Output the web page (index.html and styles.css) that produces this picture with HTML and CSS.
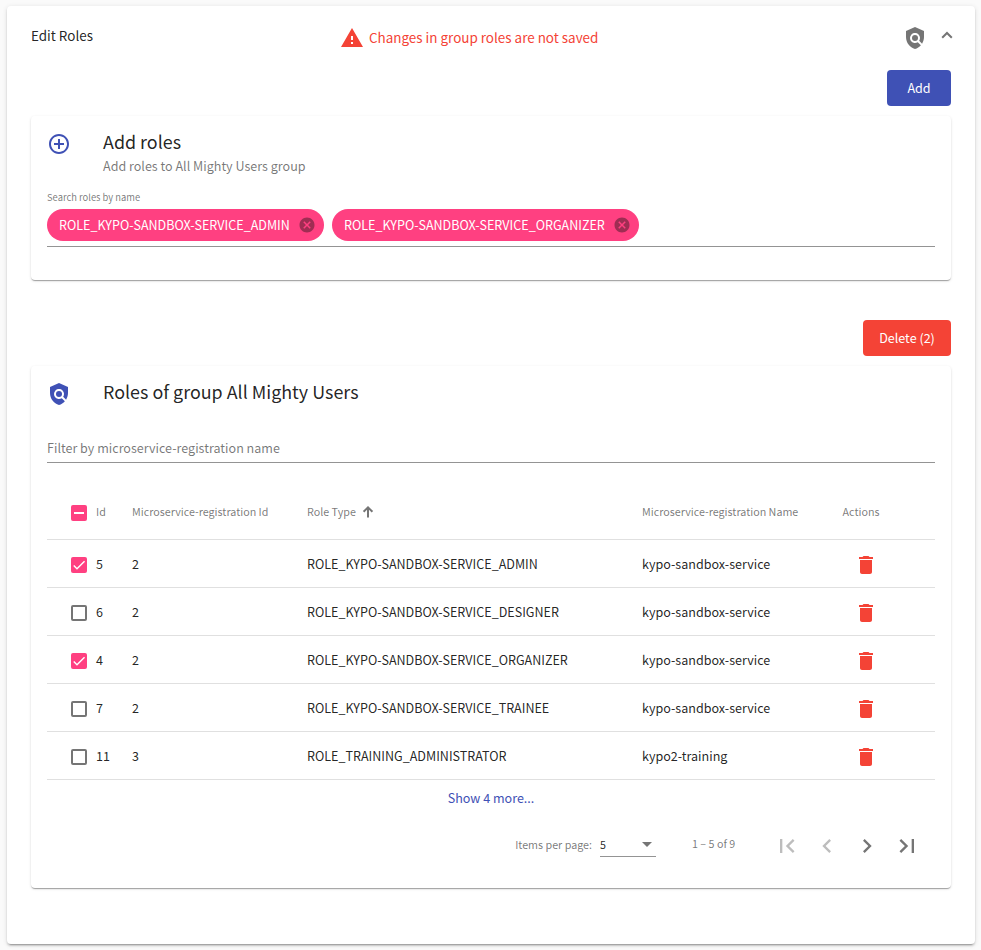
FILE: index.html
```html
<!DOCTYPE html>
<html lang="en">
<head>
<meta charset="utf-8">
<title>Edit Roles</title>
<link rel="stylesheet" href="styles.css">
</head>
<body>
<svg class="defs" aria-hidden="true">
  <symbol id="policy" viewBox="0 0 24 24"><path d="M21 5l-9-4-9 4v6c0 5.55 3.84 10.74 9 12 2.3-.56 4.33-1.9 5.88-3.71l-3.12-3.12c-1.94 1.29-4.58 1.07-6.29-.64-1.95-1.95-1.95-5.12 0-7.07 1.95-1.95 5.12-1.95 7.07 0 1.71 1.71 1.92 4.35.64 6.29l2.9 2.9C20.29 15.69 21 13.38 21 11V5z"/><circle cx="12" cy="12" r="3"/></symbol>
  <symbol id="trash" viewBox="0 0 24 24"><path d="M6 19c0 1.1.9 2 2 2h8c1.1 0 2-.9 2-2V7H6v12zM19 4h-3.5l-1-1h-5l-1 1H5v2h14V4z"/></symbol>
  <symbol id="cancel" viewBox="0 0 24 24"><path d="M12 2C6.47 2 2 6.47 2 12s4.47 10 10 10 10-4.47 10-10S17.53 2 12 2zm5 13.59L15.59 17 12 13.41 8.41 17 7 15.59 10.59 12 7 8.41 8.41 7 12 10.59 15.59 7 17 8.41 13.41 12 17 15.59z"/></symbol>
  <symbol id="check" viewBox="0 0 24 24"><path d="M4.1 12.7 9 17.6 20.3 6.3" fill="none" stroke="#fff" stroke-width="2.13"/></symbol>
</svg>
<main class="panel">
  <header class="panel-header">
    <h1 class="panel-title">Edit Roles</h1>
    <div class="warning">
      <svg class="icon" viewBox="0 0 24 24"><path d="M1 21h22L12 2 1 21zm12-3h-2v-2h2v2zm0-4h-2v-4h2v4z"/></svg>
      <span>Changes in group roles are not saved</span>
    </div>
    <svg class="icon header-policy"><use href="#policy"/></svg>
    <svg class="chevron" viewBox="0 0 12 8"><path d="M1.2 6.8 6 2l4.8 4.8" fill="none" stroke="currentColor" stroke-width="2"/></svg>
  </header>

  <div class="toolbar"><button class="button primary">Add</button></div>
  <section class="card add-card">
    <div class="card-header">
      <svg class="icon" viewBox="0 0 24 24"><path d="M13 7h-2v4H7v2h4v4h2v-4h4v-2h-4V7zm-1-5C6.48 2 2 6.48 2 12s4.48 10 10 10 10-4.48 10-10S17.52 2 12 2zm0 18c-4.41 0-8-3.59-8-8s3.59-8 8-8 8 3.59 8 8-3.59 8-8 8z"/></svg>
      <div>
        <h2 class="card-title">Add roles</h2>
        <p class="card-subtitle">Add roles to All Mighty Users group</p>
      </div>
    </div>
    <div class="search-label">Search roles by name</div>
    <div class="chips">
      <span class="chip"><span>ROLE_KYPO-SANDBOX-SERVICE_ADMIN</span><svg class="chip-icon"><use href="#cancel"/></svg></span>
      <span class="chip"><span>ROLE_KYPO-SANDBOX-SERVICE_ORGANIZER</span><svg class="chip-icon"><use href="#cancel"/></svg></span>
    </div>
  </section>

  <div class="toolbar second"><button class="button warn">Delete (2)</button></div>
  <section class="card roles-card">
    <div class="card-header">
      <svg class="icon"><use href="#policy"/></svg>
      <h2 class="card-title">Roles of group All Mighty Users</h2>
    </div>
    <div class="filter">Filter by microservice-registration name</div>
    <div class="table">
      <div class="row head">
        <span class="box on"><i class="dash"></i></span><span>Id</span><span>Microservice-registration Id</span>
        <span class="sorted">Role Type<svg class="sort" viewBox="0 0 12 12"><path d="M6 11.5V1.6M1.6 5.8 6 1.4l4.4 4.4" fill="none" stroke="currentColor" stroke-width="2"/></svg></span>
        <span>Microservice-registration Name</span><span class="actions">Actions</span>
      </div>
      <div class="row"><span class="box on"><svg><use href="#check"/></svg></span><span>5</span><span>2</span><span>ROLE_KYPO-SANDBOX-SERVICE_ADMIN</span><span>kypo-sandbox-service</span><svg class="icon trash"><use href="#trash"/></svg></div>
      <div class="row"><span class="box"></span><span>6</span><span>2</span><span>ROLE_KYPO-SANDBOX-SERVICE_DESIGNER</span><span>kypo-sandbox-service</span><svg class="icon trash"><use href="#trash"/></svg></div>
      <div class="row"><span class="box on"><svg><use href="#check"/></svg></span><span>4</span><span>2</span><span>ROLE_KYPO-SANDBOX-SERVICE_ORGANIZER</span><span>kypo-sandbox-service</span><svg class="icon trash"><use href="#trash"/></svg></div>
      <div class="row"><span class="box"></span><span>7</span><span>2</span><span>ROLE_KYPO-SANDBOX-SERVICE_TRAINEE</span><span>kypo-sandbox-service</span><svg class="icon trash"><use href="#trash"/></svg></div>
      <div class="row"><span class="box"></span><span>11</span><span>3</span><span>ROLE_TRAINING_ADMINISTRATOR</span><span>kypo2-training</span><svg class="icon trash"><use href="#trash"/></svg></div>
    </div>
    <div class="more">Show 4 more...</div>
    <div class="paginator">
      <span class="per-page">Items per page:</span>
      <span class="select"><span>5</span><i class="caret"></i></span>
      <span class="range">1 – 5 of 9</span>
      <span class="page off"><svg viewBox="0 0 24 24"><path d="M18.41 16.59L13.82 12l4.59-4.59L17 6l-6 6 6 6zM6 6h2v12H6z"/></svg></span>
      <span class="page off"><svg viewBox="0 0 24 24"><path d="M15.41 7.41L14 6l-6 6 6 6 1.41-1.41L10.83 12z"/></svg></span>
      <span class="page"><svg viewBox="0 0 24 24"><path d="M10 6L8.59 7.41 13.17 12l-4.58 4.59L10 18l6-6z"/></svg></span>
      <span class="page"><svg viewBox="0 0 24 24"><path d="M5.59 7.41L10.18 12l-4.59 4.59L7 18l6-6-6-6zM16 6h2v12h-2z"/></svg></span>
    </div>
  </section>
</main>
</body>
</html>
```
FILE: styles.css
```css
* { box-sizing: border-box; }
body {
  margin: 0;
  padding: 6px 6px 6px 7px;
  background: #fafafa;
  color: rgba(0, 0, 0, .87);
  font: 12.55px/20px "Noto Sans CJK JP", "Noto Sans", sans-serif;
}
.defs { display: none; }
h1, h2, p { margin: 0; font-weight: 400; }
svg { fill: currentColor; flex: none; }
.icon { width: 24px; height: 24px; display: block; }

.panel {
  height: 938px;
  padding: 0 24px;
  background: #fff;
  border-radius: 4px;
  box-shadow: 0 3px 1px -2px rgba(0,0,0,.2), 0 2px 2px 0 rgba(0,0,0,.14), 0 1px 5px 0 rgba(0,0,0,.12);
}
.panel-header { display: flex; height: 64px; align-items: center; }
.panel-title { width: 309px; font-size: 13.44px; margin-top: -7px; }
.warning { display: flex; align-items: center; gap: 5px; color: #f44336; font-size: 13.44px; }
.warning span { margin-top: -2px; }
.header-policy { margin-left: auto; color: #757575; }
.chevron { width: 12px; height: 8px; margin: -6px -2px 0 14px; color: #757575; }

.toolbar { display: flex; justify-content: flex-end; }
.second { margin-top: 40px; }
.button {
  height: 36px;
  padding: 0 16px;
  border: 0;
  border-radius: 4px;
  color: #fff;
  font: inherit;
  line-height: 36px;
  min-width: 64px;
}
.primary { background: #3f51b5; }
.warn { background: #f44336; width: 88px; white-space: nowrap; }

.card {
  margin-top: 10px;
  padding: 16px;
  border-radius: 4px;
  box-shadow: 0 2px 1px -1px rgba(0,0,0,.2), 0 1px 1px 0 rgba(0,0,0,.14), 0 1px 3px 0 rgba(0,0,0,.12);
}
.add-card { height: 164px; }
.roles-card { height: 522px; }
.card-header { display: flex; gap: 32px; height: 56px; }
.card-header .icon { color: #3f51b5; }
.card-title { font-size: 17.9px; line-height: 18px; }
.card-subtitle { margin-top: 6px; color: rgba(0,0,0,.54); }
.search-label { height: 21px; font-size: 9.4px; line-height: 18px; color: rgba(0,0,0,.54); }
.chips { display: flex; gap: 8px; height: 38px; border-bottom: 1px solid #949494; }
.chip {
  display: flex;
  align-items: center;
  justify-content: space-between;
  height: 32px;
  width: 277px;
  padding: 0 8px 0 12px;
  border-radius: 16px;
  background: #ff4081;
  color: #fff;
  white-space: nowrap;
}
.chip + .chip { width: 307px; }
.chip-icon { width: 18px; height: 18px; color: #111; opacity: .4; }

.filter { height: 25px; border-bottom: 1px solid #949494; color: rgba(0,0,0,.54); }
.table { margin-top: 21px; }
.row {
  display: grid;
  grid-template-columns: 25px 36px 175px 335px 200px 1fr;
  align-items: center;
  height: 48px;
  padding-left: 24px;
  border-bottom: 1px solid #e0e0e0;
}
.row > span { white-space: nowrap; }
.head { height: 56px; font-size: 10.74px; color: rgba(0,0,0,.54); }
.row > .actions { padding-left: .5px; }
.box { width: 16px; height: 16px; border: 2px solid #757575; border-radius: 2px; margin-top: 2px; }
.on { display: flex; align-items: center; justify-content: center; border: 0; background: #ff4081; }
.on svg { width: 16px; height: 16px; }
.dash { width: 10px; height: 2px; background: #fff; }
.sorted { display: flex; align-items: center; gap: 6px; }
.sort { width: 12px; height: 12px; color: #757575; }
.trash { color: #f44336; margin: 2px 0 0 12.4px; }
.more { height: 38px; line-height: 36px; text-align: center; color: #3f51b5; }
.paginator { display: flex; align-items: center; height: 56px; justify-content: flex-end; font-size: 10.74px; color: rgba(0,0,0,.54); padding-right: 8px; }
.per-page { margin-top: -2px; }
.select { display: flex; align-items: center; justify-content: space-between; width: 56px; height: 24px; margin: -2px 36px 0 8px; padding-right: 4px; border-bottom: 1px solid #949494; color: rgba(0,0,0,.87); }
.caret { border: 5px solid transparent; border-top-color: #757575; border-bottom: 0; }
.range { width: 75px; margin-top: -4px; }
.page { display: flex; align-items: center; justify-content: center; width: 40px; height: 40px; color: #757575; }
.page svg { width: 28px; height: 28px; }
.off { color: #bdbdbd; }
```
